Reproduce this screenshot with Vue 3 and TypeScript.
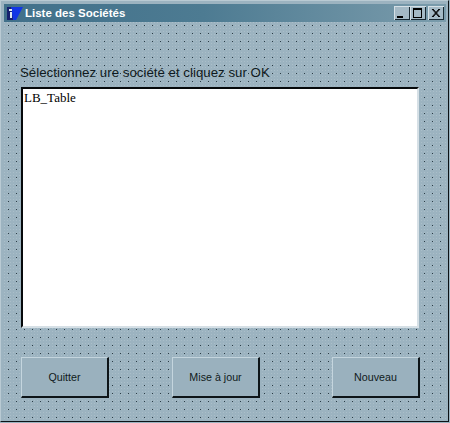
<script setup lang="ts">
const buttons: string[] = ['Quitter', 'Mise à jour', 'Nouveau']
</script>

<template>
  <div class="window">
    <header class="titlebar">
      <svg class="app-icon" width="16" height="16" viewBox="0 0 16 16" aria-hidden="true">
        <rect x="0" y="2" width="7" height="13" fill="#16206e" />
        <polygon points="4,2 16,2 9,15 6,15" fill="#1236e6" />
        <rect x="2" y="4" width="3" height="2" fill="#dfe9f2" />
        <rect x="3" y="7" width="2" height="6" fill="#dfe9f2" />
      </svg>
      <span class="title">Liste des Sociétés</span>
      <div class="controls">
        <button class="ctl" type="button" aria-label="Réduire">
          <svg width="16" height="14" viewBox="0 0 16 14"><rect x="3" y="10" width="6" height="2" fill="#000" /></svg>
        </button>
        <button class="ctl" type="button" aria-label="Agrandir">
          <svg width="16" height="14" viewBox="0 0 16 14"><path d="M3 2.5h9M3 3.5h9M3.5 3v8.5h8V3" fill="none" stroke="#000" /><path d="M3 11.5h9" stroke="#000" /></svg>
        </button>
        <button class="ctl close" type="button" aria-label="Fermer">
          <svg width="16" height="14" viewBox="0 0 16 14"><path d="M4 3l7 8M5 3l7 8M11 3l-7 8M12 3l-7 8" fill="none" stroke="#000" /></svg>
        </button>
      </div>
    </header>
    <main class="client">
      <p class="prompt">Sélectionnez ure société et cliquez sur OK</p>
      <div class="list">LB_Table</div>
      <footer class="actions">
        <button v-for="b in buttons" :key="b" class="action" type="button">{{ b }}</button>
      </footer>
    </main>
  </div>
</template>

<style>
html, body { margin: 0; background: #9cb3c0; }
</style>

<style scoped>
.window {
  box-sizing: border-box;
  width: 449px;
  height: 422px;
  padding: 3px 2px 2px 3px;
  display: flex;
  flex-direction: column;
  background: #9cb3c0;
  border-style: solid;
  border-width: 1px;
  border-color: #b9cad3 #0c1216 #0c1216 #b9cad3;
}
.titlebar {
  height: 18px;
  flex: none;
  display: flex;
  align-items: center;
  padding: 0 2px 0 3px;
  background: linear-gradient(90deg, #41708a 0%, #4d7b92 45%, #7b9cac 100%);
}
.app-icon { flex: none; margin-right: 2px; }
.title {
  font: bold 11.5px "Liberation Sans", Arial, sans-serif;
  color: #fff;
  white-space: nowrap;
}
.controls { margin-left: auto; display: flex; }
.ctl {
  box-sizing: border-box;
  width: 16px;
  height: 14px;
  padding: 0;
  border: 0;
  display: block;
  background: #a5bac6;
  box-shadow: inset 1px 1px 0 #d5e0e6, inset -1px -1px 0 #1a2a33;
}
.ctl svg { display: block; }
.close { margin-left: 2px; }
.client {
  flex: 1;
  min-height: 0;
  display: flex;
  flex-direction: column;
  padding: 0 26px 0 17px;
  background-color: #9cb3c0;
  background-image:
    conic-gradient(at 1px 1px, transparent 270deg, #2b3c45 0),
    conic-gradient(at 1px 1px, transparent 270deg, rgba(255, 255, 255, 0.14) 0);
  background-size: 8px 8px, 3px 3px;
  background-position: 4px 3px, 0 0;
}
.prompt {
  margin: 41px 0 2px -1px;
  height: 20px;
  font: 13.3px/20px "Liberation Sans", Arial, sans-serif;
  color: #101a20;
  white-space: nowrap;
}
.list {
  box-sizing: border-box;
  width: 398px;
  height: 241px;
  margin-top: 2px;
  padding: 1px 0 0 1px;
  background: #fff;
  border-style: solid;
  border-width: 2px;
  border-color: #06090b #d6e0e6 #d6e0e6 #06090b;
  font: 13px/15px "Liberation Serif", "Times New Roman", serif;
  color: #000;
}
.actions {
  display: flex;
  margin-top: 29px;
}
.action {
  box-sizing: border-box;
  flex: none;
  width: 88px;
  height: 41px;
  padding: 0;
  background: #9ab1be;
  border-style: solid;
  border-width: 1px 2px 2px 1px;
  border-color: #c4d5de #0d1418 #0d1418 #c4d5de;
  font: 10.7px "Liberation Sans", Arial, sans-serif;
  color: #101a20;
}
.action + .action { margin-left: 63px; }
.action:last-child { margin-left: 72px; }
</style>
